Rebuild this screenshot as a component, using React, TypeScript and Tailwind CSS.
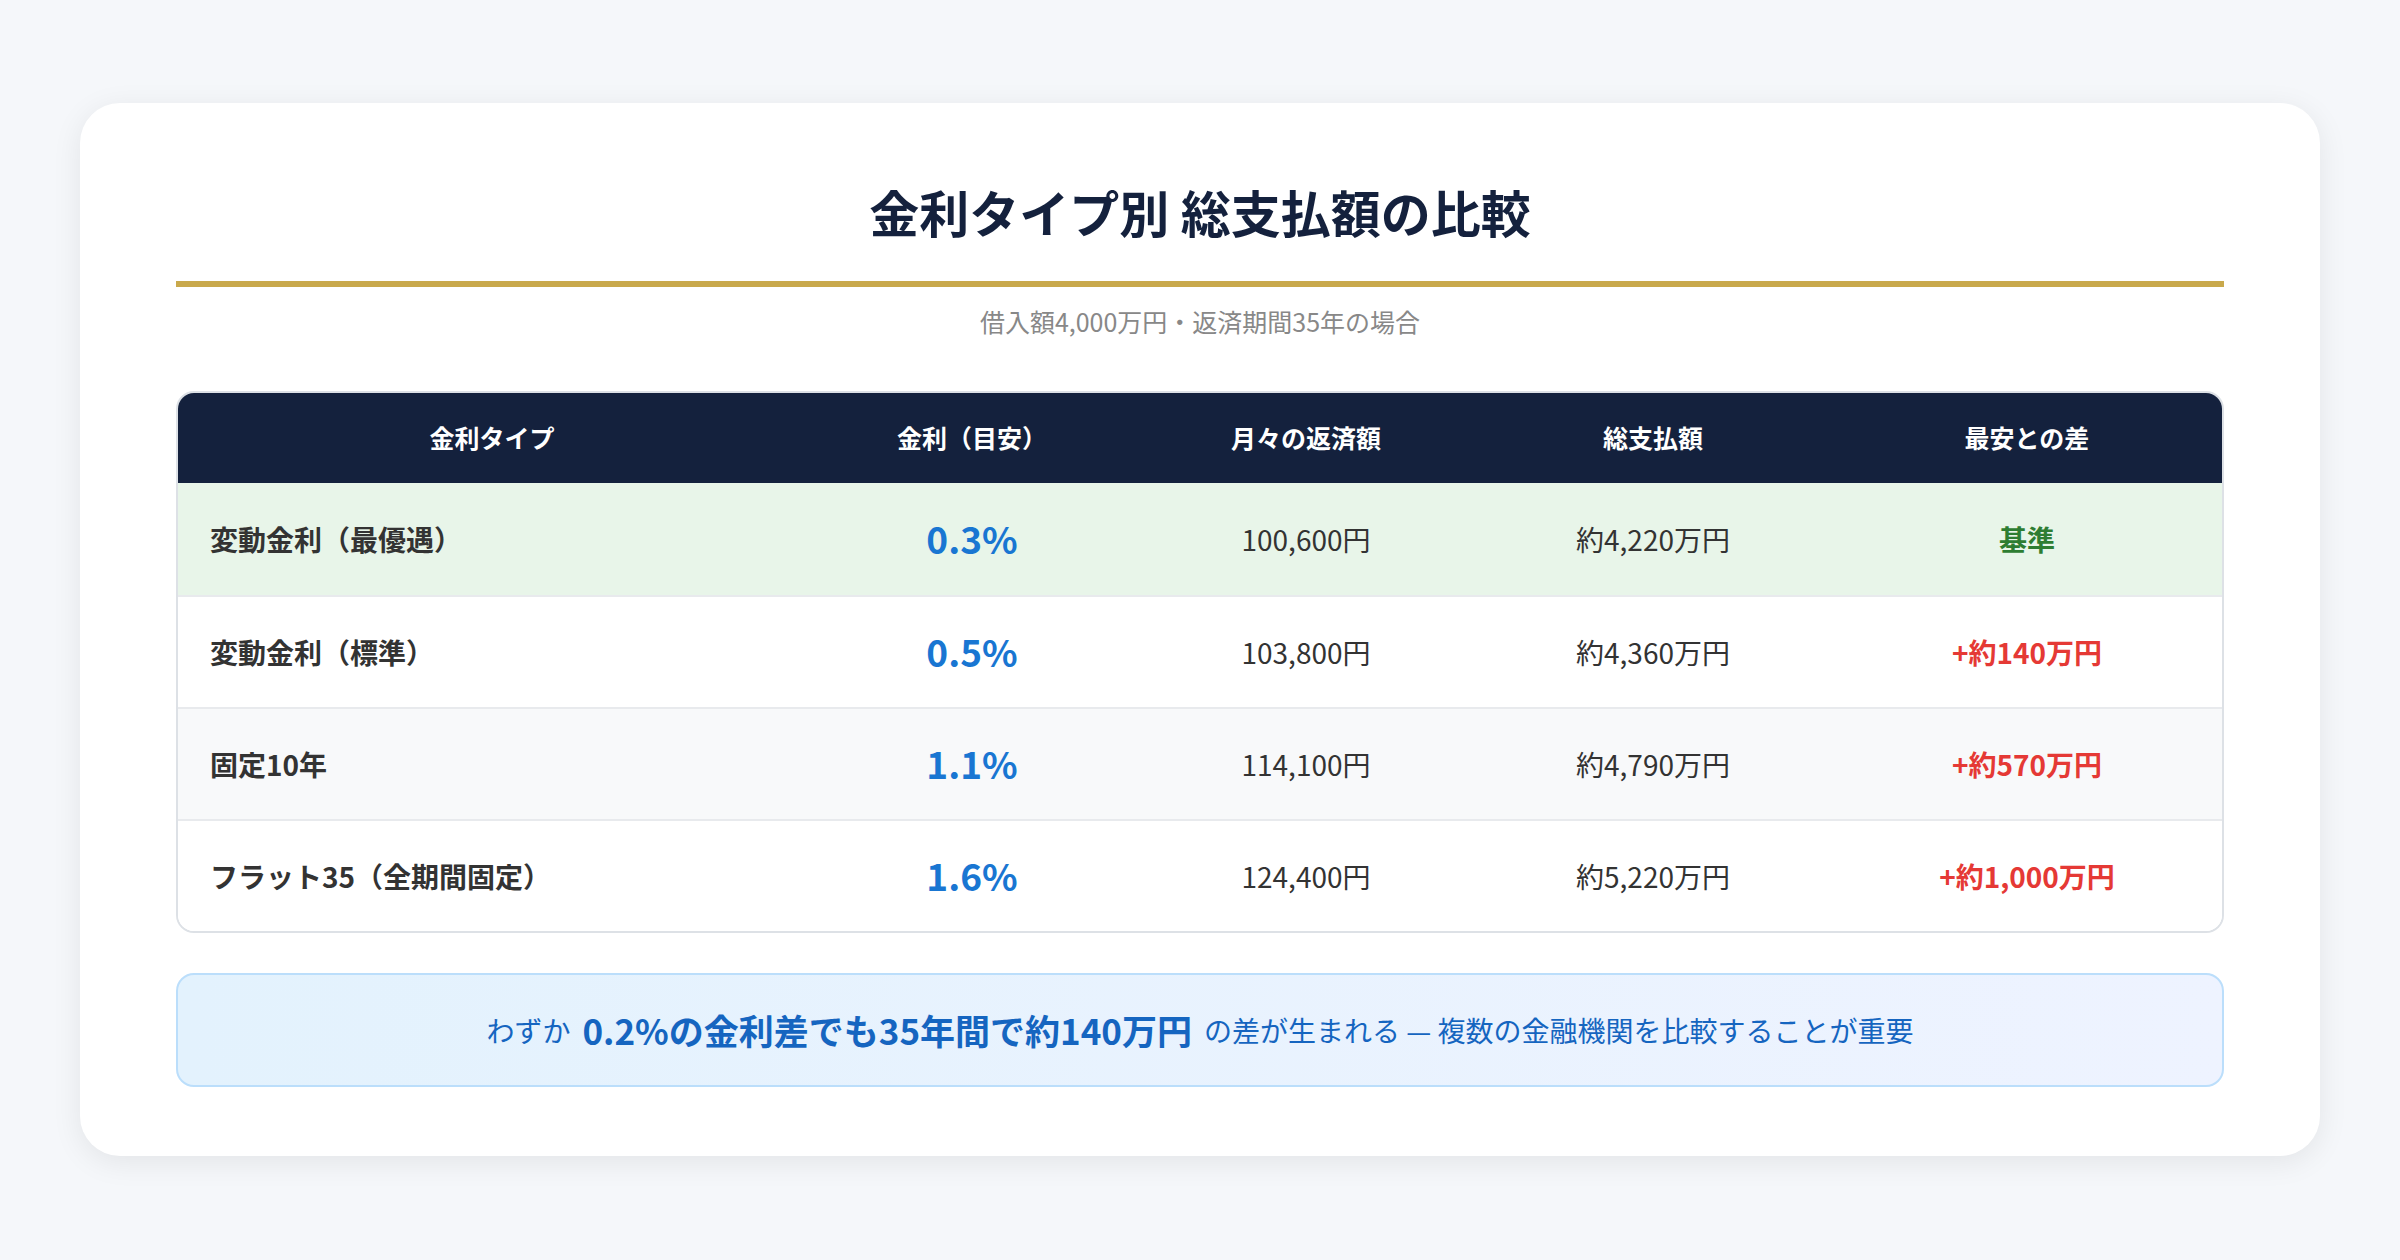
const F = { fontFamily: '"Noto Sans CJK JP", "Noto Sans", sans-serif' };
const rows = [
  { name: "変動金利（最優遇）", rate: "0.3%", m: "100,600円", t: "約4,220万円", d: "基準", bg: "bg-[#e8f5e9]", dc: "text-[#2e7d32]" },
  { name: "変動金利（標準）", rate: "0.5%", m: "103,800円", t: "約4,360万円", d: "+約140万円", bg: "bg-white", dc: "text-[#e53935]" },
  { name: "固定10年", rate: "1.1%", m: "114,100円", t: "約4,790万円", d: "+約570万円", bg: "bg-[#f8f9fa]", dc: "text-[#e53935]" },
  { name: "フラット35（全期間固定）", rate: "1.6%", m: "124,400円", t: "約5,220万円", d: "+約1,000万円", bg: "bg-white", dc: "text-[#e53935]" },
];
const cols = "grid grid-cols-[628px_332px_336px_358px_1fr]";
export default function App() {
  return (
    <div style={F} className="w-[2400px] h-[1260px] bg-[#f5f7fa] pt-[103px] px-[80px]">
      <div className="bg-white rounded-[40px] shadow-[0_6px_30px_rgba(0,0,0,0.08)] px-[96px] pt-[72px] pb-[72px] h-[1053px]">
        <h1 className="text-center text-[50px] font-bold text-[#14213d] leading-[72px]">金利タイプ別 総支払額の比較</h1>
        <div className="h-[6px] bg-[#c9a94c] mt-[34px]" />
        <p className="text-center text-[25px] text-[#888] mt-[16px] leading-[36px]">借入額4,000万円・返済期間35年の場合</p>
        <div className="mt-[52px] rounded-[18px] border-2 border-[#dde1e6] overflow-hidden">
          <div className={`${cols} bg-[#14213d] h-[90px] items-center text-white text-[25px] font-bold text-center`}>
            <div>金利タイプ</div><div>金利（目安）</div><div>月々の返済額</div><div>総支払額</div><div>最安との差</div>
          </div>
          {rows.map((r, i) => (
            <div key={i} className={`${cols} ${r.bg} h-[112px] items-center text-[28px] text-center ${i > 0 ? "border-t-2 border-[#e8eaed]" : ""}`}>
              <div className="text-left pl-[32px] font-bold text-[#333]">{r.name}</div>
              <div className="text-[37px] font-bold text-[#1976d2]">{r.rate}</div>
              <div className="text-[#333]">{r.m}</div>
              <div className="text-[#333]">{r.t}</div>
              <div className={`font-bold ${r.dc}`}>{r.d}</div>
            </div>
          ))}
        </div>
        <div className="mt-[40px] h-[114px] rounded-[18px] border-2 border-[#bbdefb] bg-gradient-to-r from-[#e3f2fd] to-[#eef3ff] flex items-center justify-center text-[#1565c0] text-[28px]">
          <span>わずか</span>
          <span className="font-bold text-[35px] mx-[12px]">0.2%の金利差でも35年間で約140万円</span>
          <span>の差が生まれる — 複数の金融機関を比較することが重要</span>
        </div>
      </div>
    </div>
  );
}
